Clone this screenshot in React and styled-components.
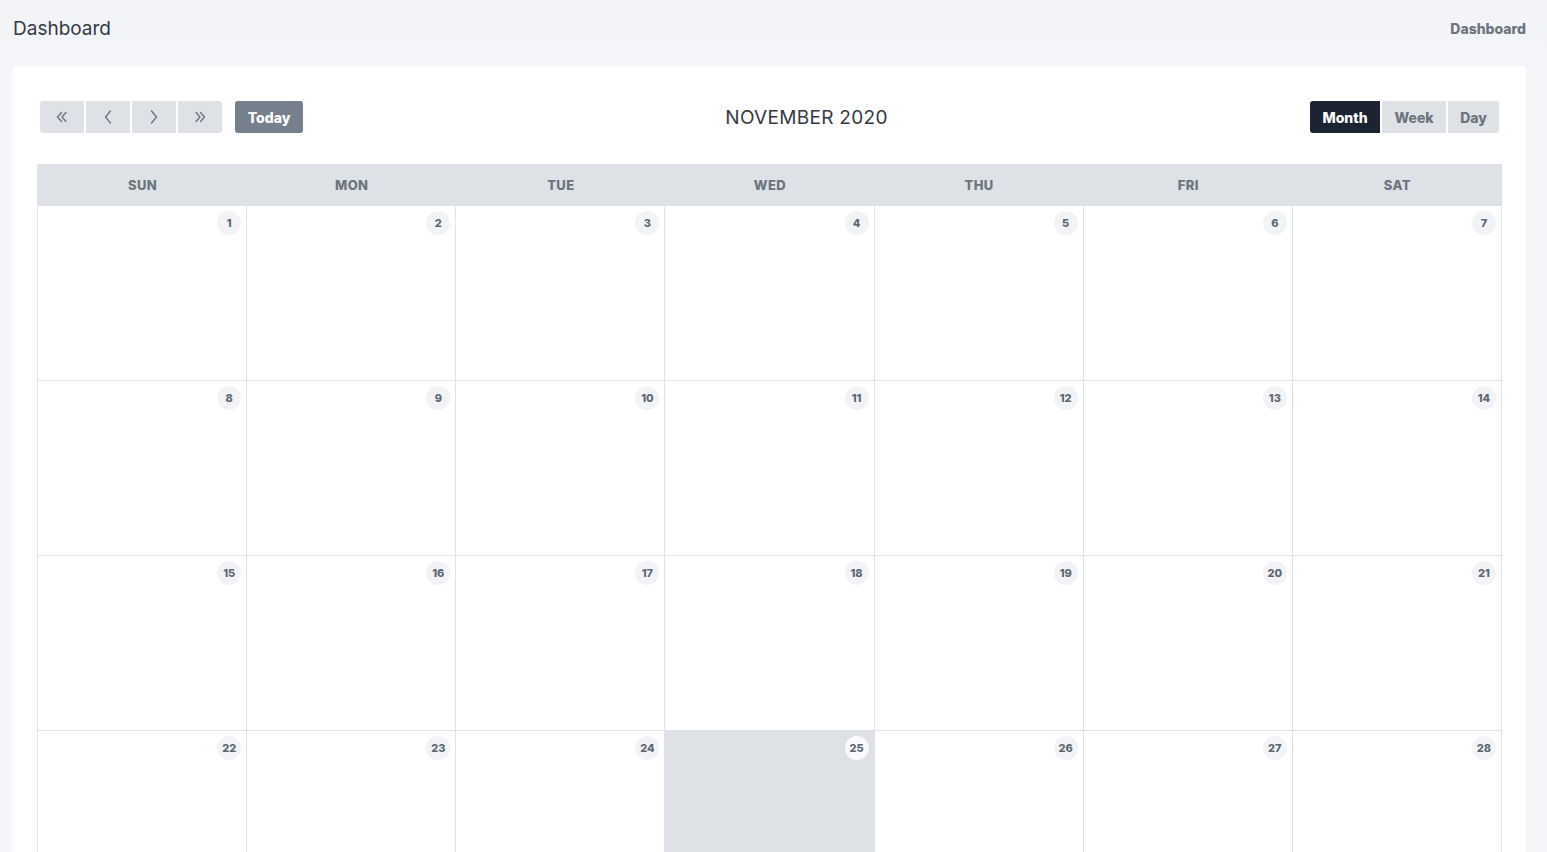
import React from "react";
import styled, { createGlobalStyle } from "styled-components";

const Global = createGlobalStyle`
  html, body { margin: 0; padding: 0; }
  body {
    background: #f3f5f9;
    font-family: "Inter", "Roboto", "Liberation Sans", sans-serif;
    overflow: hidden;
  }
`;

const Page = styled.div`
  min-height: 852px;
  background: linear-gradient(#f1f3f7, #f4f6fa 80px);
`;

const TopBar = styled.header`
  display: flex;
  align-items: center;
  justify-content: space-between;
  height: 56px;
  padding: 0 21px 0 13px;
  margin-bottom: 10px;
`;

const PageTitle = styled.h1`
  margin: 0;
  font-size: 19px;
  font-weight: 400;
  color: #343a43;
`;

const Crumb = styled.span`
  font-size: 14px;
  font-weight: 800;
  color: #6c757d;
`;

const Card = styled.section`
  margin: 0 21px 0 13px;
  background: #fff;
  border-radius: 4px;
  padding: 35px 24px 0 24px;
  height: 800px;
`;

const Toolbar = styled.div`
  display: flex;
  justify-content: space-between;
  align-items: center;
  padding: 0 3px 0 3px;
  height: 32px;
  margin-bottom: 31px;
`;

const Group = styled.div`
  display: flex;
  align-items: center;
  gap: 2px;
`;

const NavBtn = styled.button`
  width: 44px;
  height: 32px;
  border: 0;
  border-radius: ${(p) => p.$radius || "0"};
  background: #dee2e6;
  color: #6c757d;
  display: flex;
  align-items: center;
  justify-content: center;
  padding: 0;
`;

const TodayBtn = styled.button`
  margin-left: 11px;
  height: 32px;
  width: 68px;
  padding: 0;
  border: 0;
  border-radius: 3px;
  background: #76808c;
  color: #fff;
  font-family: inherit;
  font-size: 14px;
  font-weight: 800;
`;

const MonthTitle = styled.h2`
  margin: 0;
  font-size: 19px;
  font-weight: 400;
  color: #343a43;
  letter-spacing: 0.3px;
`;

const ViewBtn = styled.button`
  height: 32px;
  width: ${(p) => p.$w}px;
  padding: 0;
  border: 0;
  border-radius: ${(p) => p.$radius || "0"};
  background: ${(p) => (p.$active ? "#1b2430" : "#dee2e6")};
  color: ${(p) => (p.$active ? "#fff" : "#6c757d")};
  font-family: inherit;
  font-size: 14px;
  font-weight: 800;
`;

const Calendar = styled.div`
  display: grid;
  grid-template-columns: repeat(7, 1fr);
  border-left: 1px solid #dfe2e6;
`;

const HeadCell = styled.div`
  height: 42px;
  background: #dee2e6;
  display: flex;
  align-items: center;
  justify-content: center;
  font-size: 13px;
  font-weight: 800;
  color: #6c757d;
  letter-spacing: 0.4px;
`;

const DayCell = styled.div`
  height: 175px;
  box-sizing: border-box;
  border-right: 1px solid #dfe2e6;
  border-bottom: 1px solid #dfe2e6;
  background: ${(p) => (p.$today ? "#dee2e6" : "#fff")};
  display: flex;
  justify-content: flex-end;
  align-items: flex-start;
  padding: 5px 5px 0 0;
`;

const DayNum = styled.span`
  width: 24px;
  height: 24px;
  border-radius: 50%;
  background: ${(p) => (p.$today ? "#f8f9fb" : "#f1f3f6")};
  display: flex;
  align-items: center;
  justify-content: center;
  font-size: 11px;
  font-weight: 800;
  color: #5e6771;
`;

const Chevron = ({ dir, double }) => {
  const flip = dir === "left" ? "scale(-1,1) translate(-16,0)" : undefined;
  return (
    <svg width="16" height="16" viewBox="0 0 16 16" fill="none" stroke="currentColor"
      strokeWidth="1.4" strokeLinecap="round" strokeLinejoin="round">
      <g transform={flip}>
        {double ? (
          <>
            <path d="M4 3.5l4 4.5-4 4.5" />
            <path d="M8.5 3.5l4 4.5-4 4.5" />
          </>
        ) : (
          <path d="M5.5 2l5 6-5 6" />
        )}
      </g>
    </svg>
  );
};

const days = ["SUN", "MON", "TUE", "WED", "THU", "FRI", "SAT"];

export default function App() {
  const nums = Array.from({ length: 28 }, (_, i) => i + 1);
  return (
    <Page>
      <Global />
      <TopBar>
        <PageTitle>Dashboard</PageTitle>
        <Crumb>Dashboard</Crumb>
      </TopBar>
      <Card>
        <Toolbar>
          <Group>
            <NavBtn $radius="3px 0 0 3px"><Chevron dir="left" double /></NavBtn>
            <NavBtn><Chevron dir="left" /></NavBtn>
            <NavBtn><Chevron dir="right" /></NavBtn>
            <NavBtn $radius="0 3px 3px 0"><Chevron dir="right" double /></NavBtn>
            <TodayBtn>Today</TodayBtn>
          </Group>
          <MonthTitle>NOVEMBER 2020</MonthTitle>
          <Group>
            <ViewBtn $active $w={70} $radius="3px 0 0 3px">Month</ViewBtn>
            <ViewBtn $w={64}>Week</ViewBtn>
            <ViewBtn $w={51} $radius="0 3px 3px 0">Day</ViewBtn>
          </Group>
        </Toolbar>
        <Calendar>
          {days.map((d) => (
            <HeadCell key={d}>{d}</HeadCell>
          ))}
          {nums.map((n) => (
            <DayCell key={n} $today={n === 25}>
              <DayNum $today={n === 25}>{n}</DayNum>
            </DayCell>
          ))}
        </Calendar>
      </Card>
    </Page>
  );
}
